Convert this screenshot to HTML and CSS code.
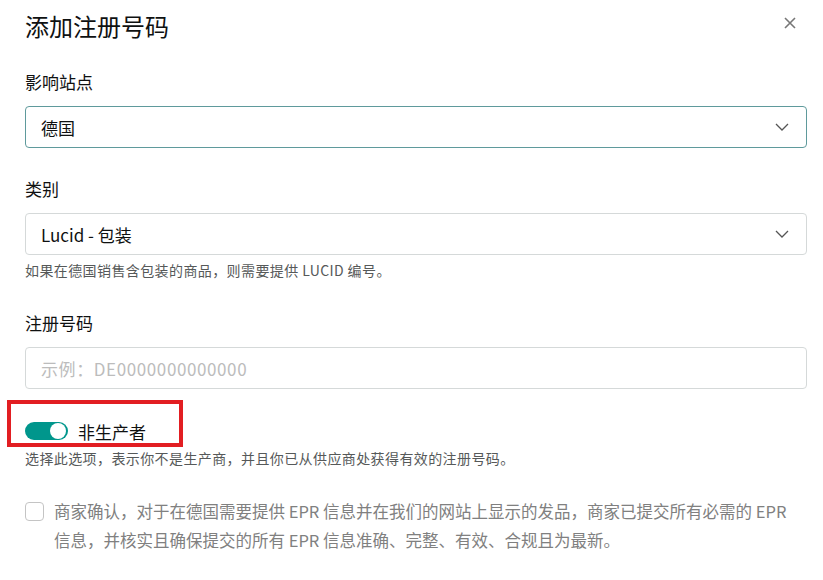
FILE: index.html
```html
<!DOCTYPE html>
<html lang="zh">
<head>
    <meta charset="UTF-8">
    <title>添加注册号码</title>
    <link rel="stylesheet" href="styles.css">
</head>
<body>
<div class="dialog">
    <div class="head">
        <h1 class="title">添加注册号码</h1>
        <span class="close">
            <svg width="14" height="14" viewBox="0 0 14 14"><path d="M2 2L12 12M12 2L2 12" stroke="#777" stroke-width="1.6" fill="none"/></svg>
        </span>
    </div>

    <div class="field first">
        <div class="label">影响站点</div>
        <div class="select focus">
            <span>德国</span>
            <svg class="arrow" width="14" height="8" viewBox="0 0 14 8"><path d="M1 1L7 7L13 1" stroke="#555" stroke-width="1.3" fill="none"/></svg>
        </div>
    </div>

    <div class="field">
        <div class="label">类别</div>
        <div class="select">
            <span>Lucid - 包装</span>
            <svg class="arrow" width="14" height="8" viewBox="0 0 14 8"><path d="M1 1L7 7L13 1" stroke="#555" stroke-width="1.3" fill="none"/></svg>
        </div>
        <div class="hint">如果在德国销售含包装的商品，则需要提供 LUCID 编号。</div>
    </div>

    <div class="field wide">
        <div class="label">注册号码</div>
        <input class="input" type="text" placeholder="示例：DE0000000000000">
    </div>

    <div class="toggle-row">
        <span class="switch"><span class="knob"></span></span>
        <span class="toggle-text">非生产者</span>
    </div>
    <div class="hint">选择此选项，表示你不是生产商，并且你已从供应商处获得有效的注册号码。</div>

    <label class="confirm">
        <span class="box"></span>
        <span class="confirm-text">商家确认，对于在德国需要提供 EPR 信息并在我们的网站上显示的发品，商家已提交所有必需的 EPR 信息，并核实且确保提交的所有 EPR 信息准确、完整、有效、合规且为最新。</span>
    </label>
</div>
</body>
</html>
```

FILE: styles.css
```css
body {
    margin: 0;
    background: #fff;
    font-family: "Noto Sans CJK SC", "Noto Sans", sans-serif;
    color: #0f1111;
}
.dialog {
    padding: 8px 16px 0 25px;
}
.head {
    display: flex;
    justify-content: space-between;
    align-items: flex-start;
}
.title {
    margin: 0;
    font-size: 24px;
    font-weight: normal;
    line-height: 36px;
}
.close {
    margin: 8px 10px 0 0;
    line-height: 0;
}
.field {
    margin-top: 29px;
}
.field.first {
    margin-top: 26px;
}
.field.wide {
    margin-top: 32px;
}
.label {
    font-size: 17px;
    line-height: 24px;
    margin-bottom: 12px;
}
.select, .input {
    box-sizing: border-box;
    width: 100%;
    height: 42px;
    border: 1px solid #d5d9d9;
    border-radius: 4px;
    font-family: inherit;
    font-size: 17px;
}
.select {
    display: flex;
    align-items: center;
    justify-content: space-between;
    padding: 0 17px 0 15px;
}
.select.focus {
    border-color: #5f9a9c;
}
.input {
    display: block;
    padding: 0 15px;
    outline: none;
}
.input::placeholder {
    color: #bcbcbc;
    letter-spacing: 0.6px;
}
.hint {
    font-size: 14px;
    line-height: 18px;
    letter-spacing: 0.4px;
    color: #565959;
    margin-top: 6px;
}
.toggle-row {
    position: relative;
    display: flex;
    align-items: center;
    margin-top: 30px;
    height: 24px;
}
.toggle-row::after {
    content: "";
    position: absolute;
    left: -18px;
    top: -19px;
    width: 168px;
    height: 39px;
    border: 4px solid #e21e22;
}
.switch {
    position: relative;
    width: 43px;
    height: 18px;
    border-radius: 9px;
    background: #00968c;
}
.knob {
    position: absolute;
    right: 2px;
    top: 1px;
    width: 16px;
    height: 16px;
    border-radius: 50%;
    background: #fff;
}
.toggle-text {
    margin-left: 10px;
    font-size: 17px;
}
.confirm {
    display: flex;
    align-items: flex-start;
    margin-top: 30px;
}
.box {
    flex: none;
    box-sizing: border-box;
    width: 19px;
    height: 19px;
    margin-top: 5px;
    border: 1px solid #c4c4c4;
    border-radius: 4px;
}
.confirm-text {
    margin: 0 8px 0 10px;
    font-size: 16.5px;
    line-height: 29px;
    color: #808080;
}
```
